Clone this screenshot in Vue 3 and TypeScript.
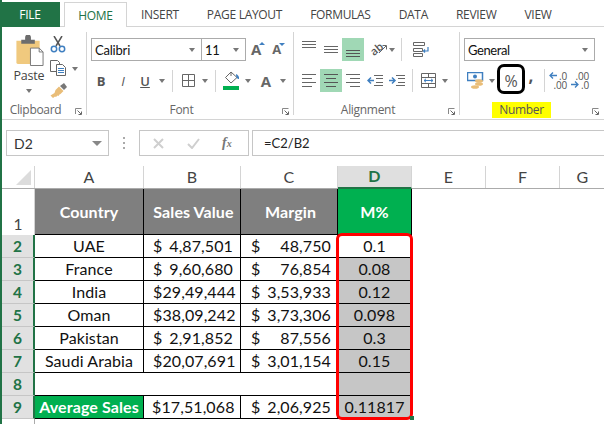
<script setup lang="ts">
interface SheetRow {
  num: number;
  country: string;
  sales: [string, string];
  margin: [string, string];
  pct: string;
}

const tabs: string[] = ["INSERT", "PAGE LAYOUT", "FORMULAS", "DATA", "REVIEW", "VIEW"];
const columns: string[] = ["A", "B", "C", "D", "E", "F", "G"];

const rows: SheetRow[] = [
  { num: 2, country: "UAE", sales: ["$", "4,87,501"], margin: ["$", "48,750"], pct: "0.1" },
  { num: 3, country: "France", sales: ["$", "9,60,680"], margin: ["$", "76,854"], pct: "0.08" },
  { num: 4, country: "India", sales: ["$", "29,49,444"], margin: ["$", "3,53,933"], pct: "0.12" },
  { num: 5, country: "Oman", sales: ["$", "38,09,242"], margin: ["$", "3,73,306"], pct: "0.098" },
  { num: 6, country: "Pakistan", sales: ["$", "2,91,852"], margin: ["$", "87,556"], pct: "0.3" },
  { num: 7, country: "Saudi Arabia", sales: ["$", "20,07,691"], margin: ["$", "3,01,154"], pct: "0.15" },
];

// two lines in one text, the decimal buttons stack them
const decLess = ".0\n.00";
const decMore = ".00\n.0";
</script>

<template>
  <div class="app">
    <div class="tabs">
      <div class="tab-file">FILE</div>
      <div class="tab-home">HOME</div>
      <div v-for="t in tabs" :key="t" class="tab">{{ t }}</div>
    </div>

    <div class="ribbon">
      <!-- clipboard -->
      <section class="group g-clip">
        <div class="clip-body">
          <div class="paste">
            <svg width="30" height="31" viewBox="0 0 30 32">
              <path d="M2 6h24v22a2 2 0 0 1-2 2H4a2 2 0 0 1-2-2z" fill="#f0c97e" />
              <path d="M7 5h4V2.500a3 3 0 0 1 6 0V5h4v4H7z" fill="#6d6d6d" />
              <path d="M16.500 13.500h9l4 4v14h-13z" fill="#fff" stroke="#777" />
              <path d="M25.500 13.500v4h4" fill="none" stroke="#777" />
            </svg>
            <span class="paste-label">Paste</span>
            <i class="caret" />
          </div>
          <div class="clip-small">
            <svg width="16" height="17" viewBox="0 0 16 17">
              <path d="M4 0l6 10M12 0L6 10" stroke="#555" stroke-width="1.500" fill="none" />
              <circle cx="4" cy="13" r="2.700" fill="none" stroke="#3f7fc0" stroke-width="1.500" />
              <circle cx="12" cy="13" r="2.700" fill="none" stroke="#3f7fc0" stroke-width="1.500" />
            </svg>
            <div class="copy-row">
              <svg width="16" height="16" viewBox="0 0 16 16">
                <path d="M.500.500h7l2 2v9h-9z" fill="#fff" stroke="#666" />
                <path d="M6.500 4.500h6l3 3v8h-9z" fill="#fff" stroke="#666" />
                <path d="M8 8.500h6M8 10.500h6M8 12.500h6" stroke="#3f7fc0" />
              </svg>
              <i class="caret cp" />
            </div>
            <svg width="17" height="16" viewBox="0 0 17 16">
              <path d="M10 3l4 4 3-3-3-4z" fill="#777" />
              <path d="M9 3.500l4.500 4.500-3 3-1 .500-1 1.500-1-.500-1.500 1.500-1-.500-2 1.500-2.500-2.500 4-2.500 1-3z" fill="#e9bd78" />
            </svg>
          </div>
        </div>
        <footer class="g-foot">
          <span class="g-label">Clipboard</span>
          <svg class="launch" width="7" height="7" viewBox="0 0 7 7"><path d="M.500 6V.500H6.500" fill="none" stroke="#888" /><path d="M2.500 2.500L6 6M3.500 6.500h3v-3" fill="none" stroke="#666" /></svg>
        </footer>
      </section>

      <!-- font -->
      <section class="group g-font">
        <div class="f-top">
          <div class="combo c-name"><span>Calibri</span><i class="caret" /></div>
          <div class="combo c-size"><span>11</span><i class="caret" /></div>
          <div class="grow">A<i class="up" /></div>
          <div class="shrink">A<i class="down" /></div>
        </div>
        <div class="f-bot">
          <div class="btn b-letter bold">B</div>
          <div class="btn b-letter ital">I</div>
          <div class="btn b-letter under">U</div>
          <div class="car-box"><i class="caret" /></div>
          <i class="sep" />
          <div class="btn">
            <svg width="13" height="13" viewBox="0 0 13 13"><path d="M.500.500h12v12H.500zM6.500.500v12M.500 6.500h12" fill="none" stroke="#666" /></svg>
          </div>
          <div class="car-box"><i class="caret" /></div>
          <i class="sep" />
          <div class="btn">
            <svg width="17" height="19" viewBox="0 0 17 19">
              <path d="M8 1L2.500 6.500 8 12l6-5.500z" fill="#fff" stroke="#666" />
              <path d="M8 1V5" stroke="#666" />
              <path d="M13 3c2 1 3.500 2.500 3 5-1.500 0-3-1-3-5z" fill="#3f7fc0" />
              <rect y="15" width="16" height="4" fill="#00b050" />
            </svg>
          </div>
          <div class="car-box"><i class="caret" /></div>
          <div class="btn b-letter color-a">A</div>
          <div class="car-box"><i class="caret" /></div>
        </div>
        <footer class="g-foot">
          <span class="g-label">Font</span>
          <svg class="launch" width="7" height="7" viewBox="0 0 7 7"><path d="M.500 6V.500H6.500" fill="none" stroke="#888" /><path d="M2.500 2.500L6 6M3.500 6.500h3v-3" fill="none" stroke="#666" /></svg>
        </footer>
      </section>

      <!-- alignment -->
      <section class="group g-align">
        <div class="a-row a-top">
          <div class="btn"><svg width="14" height="7" viewBox="0 0 14 7"><path d="M0 .500h14M0 3.500h14M0 6.500h14" stroke="#666" /></svg></div>
          <div class="btn"><svg width="14" height="7" viewBox="0 0 14 7"><path d="M0 .500h14M0 3.500h14M0 6.500h14" stroke="#666" /></svg></div>
          <div class="btn on btn-bottom"><svg width="14" height="7" viewBox="0 0 14 7"><path d="M0 .500h14M0 3.500h14M0 6.500h14" stroke="#555" /></svg></div>
          <div class="btn orient">
            <span class="ab">ab</span>
            <svg width="17" height="16" viewBox="0 0 17 16">
              <path d="M9 11l7-7M12.500 3.500h4V7.500" fill="none" stroke="#666" />
            </svg>
          </div>
          <div class="car-box"><i class="caret" /></div>
          <i class="sep tall" />
          <div class="btn">
            <svg width="16" height="15" viewBox="0 0 16 15">
              <path d="M.500.500h11v3H.500zM.500 6.500h9v3h-9zM.500 11.500h9v3h-9z" fill="none" stroke="#666" />
              <path d="M15 5v4h-4.500M12 7.500L10.500 9l1.500 1.500" fill="none" stroke="#3f7fc0" stroke-width="1.200" />
            </svg>
          </div>
        </div>
        <div class="a-row">
          <div class="btn"><svg width="14" height="13" viewBox="0 0 14 13"><path d="M0 .500h14M0 4.500h10M0 8.500h14M0 12.500h10" stroke="#666" /></svg></div>
          <div class="btn on"><svg width="14" height="13" viewBox="0 0 14 13"><path d="M0 .500h14M2 4.500h10M0 8.500h14M2 12.500h10" stroke="#555" /></svg></div>
          <div class="btn"><svg width="14" height="13" viewBox="0 0 14 13"><path d="M0 .500h14M4 4.500h10M0 8.500h14M4 12.500h10" stroke="#666" /></svg></div>
          <div class="btn">
            <svg width="16" height="11" viewBox="0 0 16 11">
              <path d="M7 .500h9M9 3.500h7M9 7.500h7M7 10.500h9" stroke="#666" />
              <path d="M7 5.500H1M4 2.500L1 5.500l3 3" fill="none" stroke="#3f7fc0" stroke-width="1.500" />
            </svg>
          </div>
          <div class="btn">
            <svg width="16" height="11" viewBox="0 0 16 11">
              <path d="M7 .500h9M9 3.500h7M9 7.500h7M7 10.500h9" stroke="#666" />
              <path d="M0 5.500h6M3 2.500l3 3-3 3" fill="none" stroke="#3f7fc0" stroke-width="1.500" />
            </svg>
          </div>
          <i class="sep tall s2" />
          <div class="btn">
            <svg width="15" height="15" viewBox="0 0 15 15">
              <path d="M.500.500h14v14H.500zM.500 4.500h14M.500 10.500h14M7.500.500v4M7.500 10.500v4" fill="none" stroke="#666" />
              <path d="M3 7.500h9M5 5.800L3 7.500l2 1.700M10 5.800l2 1.700-2 1.700" fill="none" stroke="#3f7fc0" />
            </svg>
          </div>
          <div class="car-box"><i class="caret" /></div>
        </div>
        <footer class="g-foot">
          <span class="g-label">Alignment</span>
          <svg class="launch" width="7" height="7" viewBox="0 0 7 7"><path d="M.500 6V.500H6.500" fill="none" stroke="#888" /><path d="M2.500 2.500L6 6M3.500 6.500h3v-3" fill="none" stroke="#666" /></svg>
        </footer>
      </section>

      <!-- number -->
      <section class="g-num">
        <div class="combo c-general"><span>General</span><i class="caret" /></div>
        <div class="n-row">
          <div class="btn">
            <svg width="17" height="17" viewBox="0 0 17 17">
              <rect x=".5" y=".5" width="15" height="8" fill="#fff" stroke="#3f7fc0" stroke-width="1.500" />
              <circle cx="8" cy="4.500" r="2" fill="#3f7fc0" />
              <ellipse cx="12" cy="9" rx="4" ry="1.800" fill="#e9bd78" />
              <ellipse cx="12" cy="12" rx="4" ry="1.800" fill="#e9bd78" />
              <ellipse cx="8" cy="15" rx="4" ry="1.800" fill="#e9bd78" />
            </svg>
          </div>
          <div class="car-box"><i class="caret" /></div>
          <div class="btn pct-btn">%<span class="ring" /></div>
          <div class="comma">,</div>
          <i class="sep tall s3" />
          <div class="dec">
            <svg class="arrow-l" width="8" height="7" viewBox="0 0 8 7"><path d="M8 3.500H1M4 .5L1 3.500l3 3" fill="none" stroke="#3f7fc0" stroke-width="1.300" /></svg>
            <span class="dec-text">{{ decLess }}</span>
          </div>
          <div class="dec">
            <span class="dec-text">{{ decMore }}</span>
            <svg class="arrow-r" width="8" height="7" viewBox="0 0 8 7"><path d="M0 3.500h7M4 .5l3 3-3 3" fill="none" stroke="#3f7fc0" stroke-width="1.300" /></svg>
          </div>
        </div>
        <footer class="g-foot foot-num">
          <span class="g-label hl">Number</span>
          <svg class="launch" width="7" height="7" viewBox="0 0 7 7"><path d="M.500 6V.500H6.500" fill="none" stroke="#888" /><path d="M2.500 2.500L6 6M3.500 6.500h3v-3" fill="none" stroke="#666" /></svg>
        </footer>
      </section>
    </div>

    <div class="fbar">
      <div class="namebox"><span>D2</span><i class="caret big" /></div>
      <div class="dots"><i /><i /><i /></div>
      <div class="fx-box">
        <svg width="11" height="11" viewBox="0 0 11 11"><path d="M1 1l9 9M10 1l-9 9" stroke="#cfcfcf" stroke-width="2" /></svg>
        <svg width="13" height="11" viewBox="0 0 13 11"><path d="M1 6l4 4 7-9" fill="none" stroke="#cfcfcf" stroke-width="2" /></svg>
        <span class="fx">f<small>x</small></span>
      </div>
      <div class="finput">=C2/B2</div>
    </div>

    <div class="sheet">
      <div class="row row-head">
        <div class="corner"><i /></div>
        <div
          v-for="c in columns"
          :key="c"
          class="col-head"
          :class="['col-' + c, { active: c === 'D' }]"
        >
          {{ c }}
        </div>
      </div>

      <div class="row row-1">
        <div class="row-num plain">1</div>
        <div class="cell col-A th">Country</div>
        <div class="cell col-B th nudge">Sales Value</div>
        <div class="cell col-C th nudge">Margin</div>
        <div class="cell col-D th green">M%</div>
      </div>

      <div v-for="(r, i) in rows" :key="r.num" class="row">
        <div class="row-num">{{ r.num }}</div>
        <div class="cell col-A">{{ r.country }}</div>
        <div class="cell col-B money">
          <span>{{ r.sales[0] }}</span><span>{{ r.sales[1] }}</span>
        </div>
        <div class="cell col-C money">
          <span>{{ r.margin[0] }}</span><span>{{ r.margin[1] }}</span>
        </div>
        <div class="cell col-D" :class="{ shade: i > 0 }">{{ r.pct }}</div>
      </div>

      <div class="row">
        <div class="row-num">8</div>
        <div class="cell col-merged" />
        <div class="cell col-D shade" />
      </div>

      <div class="row">
        <div class="row-num">9</div>
        <div class="cell col-A avg">Average Sales</div>
        <div class="cell col-B money tight"><span>$</span><span>17,51,068</span></div>
        <div class="cell col-C money"><span>$</span><span>2,06,925</span></div>
        <div class="cell col-D shade">0.11817</div>
      </div>

      <div class="row row-end"><div class="row-num blank" /></div>

      <!-- selection highlight sits on top of column D -->
      <div class="red-box" />
      <div class="handle" />
    </div>
  </div>
</template>

<style>
html,
body {
  margin: 0;
  background: #fff;
  overflow: hidden;
}
</style>

<style scoped>
.app {
  width: 604px;
  height: 424px;
  overflow: hidden;
  font-family: "Open Sans", "Liberation Sans", sans-serif;
  color: #444;
  box-sizing: border-box;
  border-left: 2px solid #217346;
  background: #fff;
}
.app * {
  box-sizing: border-box;
}

/* tabs */
.tabs {
  display: flex;
  height: 27px;
  margin-left: -2px;
  padding-top: 2px;
  border-bottom: 1px solid #d4d4d4;
  font-size: 12px;
  letter-spacing: -0.3px;
}
.tab-file {
  width: 60px;
  height: 25px;
  background: #217346;
  color: #fff;
  display: flex;
  align-items: center;
  justify-content: center;
}
.tab-home {
  width: 63px;
  height: 25px;
  margin-left: 4px;
  border: 1px solid #d4d4d4;
  border-bottom: 0;
  background: #fff;
  color: #217346;
  display: flex;
  align-items: center;
  justify-content: center;
}
.tab {
  display: flex;
  align-items: center;
  padding: 0 14px;
  height: 24px;
}

/* ribbon */
.ribbon {
  display: flex;
  height: 93px;
  border-bottom: 1px solid #d4d4d4;
}
.group,
.g-num {
  position: relative;
  padding-top: 5px;
}
.group::after {
  content: "";
  position: absolute;
  right: 0;
  top: 5px;
  bottom: 4px;
  width: 1px;
  background: #d4d4d4;
}
.g-clip {
  width: 85px;
}
.g-font {
  width: 207px;
  padding-left: 4px;
}
.g-align {
  width: 166px;
  padding-left: 4px;
}
.g-num {
  width: 144px;
  padding-left: 4px;
}
.g-foot {
  position: absolute;
  left: 0;
  right: 0;
  bottom: 0;
  height: 19px;
  padding-right: 18px;
  display: flex;
  align-items: center;
  justify-content: center;
}
.g-label {
  font-size: 12px;
  letter-spacing: -0.3px;
  color: #666;
}
.launch {
  position: absolute;
  right: 5px;
  bottom: 4px;
}
.caret {
  display: block;
  width: 0;
  height: 0;
  border-left: 3.5px solid transparent;
  border-right: 3.5px solid transparent;
  border-top: 4px solid #777;
}
.caret.big {
  border-left-width: 5px;
  border-right-width: 5px;
  border-top-width: 5px;
  border-top-color: #888;
}
.btn {
  width: 22px;
  height: 23px;
  display: flex;
  align-items: center;
  justify-content: center;
  flex: none;
}
.btn.on {
  background: #a0d8b5;
}
.car-box {
  width: 12px;
  display: flex;
  align-items: center;
  justify-content: center;
  flex: none;
}
.sep {
  display: block;
  width: 1px;
  height: 22px;
  background: #d4d4d4;
  margin: 0 4px;
  flex: none;
  align-self: center;
}

/* clipboard */
.clip-body {
  display: flex;
  padding-left: 12px;
  padding-top: 3px;
}
.paste {
  width: 30px;
  display: flex;
  flex-direction: column;
  align-items: center;
}
.paste-label {
  font-size: 12.5px;
  line-height: 16px;
  margin-top: 2px;
  letter-spacing: -0.2px;
}
.paste .caret {
  margin-top: 5px;
}
.clip-small {
  margin-left: 6px;
  display: flex;
  flex-direction: column;
  gap: 7px;
  padding-top: 1px;
}
.copy-row {
  display: flex;
  align-items: center;
  gap: 6px;
}
.cp {
  margin-top: 2px;
}

/* font */
.f-top {
  display: flex;
  align-items: center;
  padding-top: 6px;
}
.combo {
  height: 23px;
  border: 1px solid #ababab;
  display: flex;
  align-items: center;
  justify-content: space-between;
  padding: 0 6px 0 3px;
  font-family: Lato, "Liberation Sans", sans-serif;
  font-size: 13px;
  letter-spacing: -0.2px;
  color: #111;
}
.c-name {
  width: 111px;
}
.c-size {
  width: 44px;
  margin-left: 0;
  border-left: 0;
}
.grow,
.shrink {
  position: relative;
  font-weight: 700;
  color: #666;
  line-height: 1;
}
.grow {
  font-size: 15px;
  margin-left: 5px;
}
.shrink {
  font-size: 13px;
  margin-left: 11px;
}
.up,
.down {
  position: absolute;
  right: -4px;
  top: 0;
  width: 0;
  height: 0;
  border-left: 3px solid transparent;
  border-right: 3px solid transparent;
}
.up {
  border-bottom: 3px solid #3f7fc0;
}
.down {
  border-top: 3px solid #3f7fc0;
}
.f-bot {
  display: flex;
  margin-top: 8px;
  margin-left: -1px;
}
.b-letter {
  font-size: 13px;
  color: #555;
}
.bold {
  font-weight: 700;
}
.ital {
  font-style: italic;
}
.under {
  text-decoration: underline;
  font-weight: 600;
}
.color-a {
  font-size: 15px;
  font-weight: 700;
  color: #666;
  margin-left: 1px;
}

/* alignment */
.a-row {
  display: flex;
  height: 23px;
}
.a-top {
  margin-top: 6px;
  margin-bottom: 8px;
}
.tall {
  height: 23px;
  margin: 0 8px 0 3px;
}
.s2 {
  margin: 0 4px 0 4px;
}
.btn-bottom {
  align-items: flex-end;
  padding-bottom: 4px;
}
.a-top .btn:first-child {
  align-items: flex-start;
  padding-top: 3px;
}
.orient {
  position: relative;
  margin-left: 3px;
  margin-right: -3px;
}
.ab {
  position: absolute;
  left: 3px;
  top: 5px;
  font-size: 11px;
  line-height: 12px;
  font-weight: 600;
  color: #555;
  transform: rotate(-40deg);
}

/* number */
.c-general {
  width: 131px;
  margin-top: 6px;
  margin-bottom: 8px;
  letter-spacing: -0.4px;
}
.n-row {
  display: flex;
  height: 23px;
}
.pct-btn {
  position: relative;
  font-size: 16px;
  color: #555;
  margin-left: -1px;
  margin-right: 2px;
  width: 28px;
}
.ring {
  position: absolute;
  inset: -5px 0 -2px;
  border: 3px solid #000;
  border-radius: 7px;
}
.comma {
  width: 8px;
  font-weight: 700;
  font-size: 17px;
  line-height: 13px;
  text-align: center;
  color: #555;
}
.s3 {
  margin: 0 4px 0 9px;
}
.dec {
  position: relative;
  width: 22px;
  height: 23px;
  flex: none;
}
.dec-text {
  position: absolute;
  right: 4px;
  top: 3px;
  font-size: 10px;
  line-height: 9px;
  letter-spacing: -0.2px;
  white-space: pre;
  text-align: right;
  color: #555;
}
.arrow-l {
  position: absolute;
  left: 0;
  top: 3px;
}
.arrow-r {
  position: absolute;
  left: 0;
  top: 12px;
}
.foot-num {
  justify-content: flex-start;
  padding-left: 32px;
  padding-right: 0;
}
.hl {
  background: #ff0;
  width: 59px;
  height: 16px;
  line-height: 15px;
  text-align: center;
  color: #555;
}

/* formula bar */
.fbar {
  display: flex;
  height: 26px;
  margin-top: 10px;
  margin-left: 4px;
}
.namebox {
  width: 103px;
  border: 1px solid #c6c6c6;
  display: flex;
  align-items: center;
  justify-content: space-between;
  padding: 0 6px 0 7px;
  font-family: Lato, "Liberation Sans", sans-serif;
  font-size: 14px;
  color: #333;
}
.dots {
  width: 30px;
  display: flex;
  flex-direction: column;
  gap: 3px;
  align-items: center;
  justify-content: center;
}
.dots i {
  width: 2px;
  height: 2px;
  background: #aaa;
}
.fx-box {
  width: 110px;
  border: 1px solid #c6c6c6;
  display: flex;
  align-items: center;
  padding-left: 13px;
  gap: 23px;
}
.fx {
  font-family: "Liberation Serif", serif;
  font-style: italic;
  font-weight: 700;
  font-size: 14px;
  color: #777;
  margin-left: -1px;
}
.fx small {
  font-size: 10px;
}
.finput {
  flex: 1;
  margin-left: 3px;
  border: 1px solid #c6c6c6;
  border-right: 0;
  display: flex;
  align-items: center;
  padding-left: 11px;
  font-family: Lato, "Liberation Sans", sans-serif;
  font-size: 13px;
  color: #222;
}

/* sheet */
.sheet {
  position: relative;
  margin-top: 10px;
  font-family: Lato, "Liberation Sans", sans-serif;
  font-size: 16px;
  letter-spacing: 0.1px;
  color: #111;
}
.row {
  display: flex;
  height: 23px;
}
.row-head {
  height: 23px;
  border-bottom: 1px solid #ababab;
}
.row-1 {
  height: 46px;
}
.corner {
  width: 33px;
  flex: none;
  border-right: 1px solid #d4d4d4;
  position: relative;
}
.corner i {
  position: absolute;
  right: 3px;
  bottom: 3px;
  width: 0;
  height: 0;
  border-left: 15px solid transparent;
  border-bottom: 15px solid #dcdcdc;
}
.col-head {
  display: flex;
  align-items: center;
  justify-content: center;
  padding-bottom: 2px;
  border-right: 1px solid #d4d4d4;
  color: #444;
  font-size: 16px;
}
.col-head.active {
  background: #dfdfdf;
  color: #217346;
  font-weight: 700;
  border-bottom: 2px solid #217346;
  height: 23px;
}
.col-A {
  width: 109px;
  flex: none;
}
.col-B,
.col-C {
  width: 97px;
  flex: none;
}
.col-D,
.col-E,
.col-F {
  width: 74px;
  flex: none;
}
.col-G {
  width: 45px;
  flex: none;
  border-right: 0;
}
.col-merged {
  width: 303px;
  flex: none;
}
.row-num {
  width: 33px;
  flex: none;
  background: #e1e1e1;
  border-right: 2px solid #217346;
  border-bottom: 1px solid #c6c6c6;
  color: #217346;
  font-weight: 700;
  font-size: 15.5px;
  display: flex;
  align-items: center;
  justify-content: center;
}
.row-num.plain {
  background: #fff;
  border-right: 1px solid #d4d4d4;
  border-bottom: 0;
  color: #444;
  font-weight: 400;
  align-items: flex-end;
  padding-bottom: 2px;
}
.row-num.blank {
  background: #fff;
  border-right: 1px solid #ababab;
  border-bottom: 0;
}
.row-end {
  height: 6px;
}
.cell {
  border-right: 1px solid #000;
  border-bottom: 1px solid #000;
  display: flex;
  align-items: center;
  justify-content: center;
  padding-bottom: 1px;
  white-space: nowrap;
}
.th {
  background: #7f7f7f;
  color: #fff;
  font-weight: 700;
}
.nudge {
  padding-left: 3px;
}
.th.green,
.avg {
  background: #00b050;
  color: #fff;
  font-weight: 700;
}
.shade {
  background: #c6c6c6;
}
.money {
  justify-content: space-between;
  padding: 0 7px 1px 9px;
}
.col-C.money {
  padding: 0 6px 1px 10px;
}
.tight {
  padding-left: 8px;
}
.red-box {
  position: absolute;
  left: 334px;
  top: 67px;
  width: 77px;
  height: 187px;
  border: 3px solid #f00;
  border-radius: 6px;
}
.handle {
  position: absolute;
  left: 408px;
  top: 250px;
  width: 4px;
  height: 4px;
  background: #217346;
}
</style>
